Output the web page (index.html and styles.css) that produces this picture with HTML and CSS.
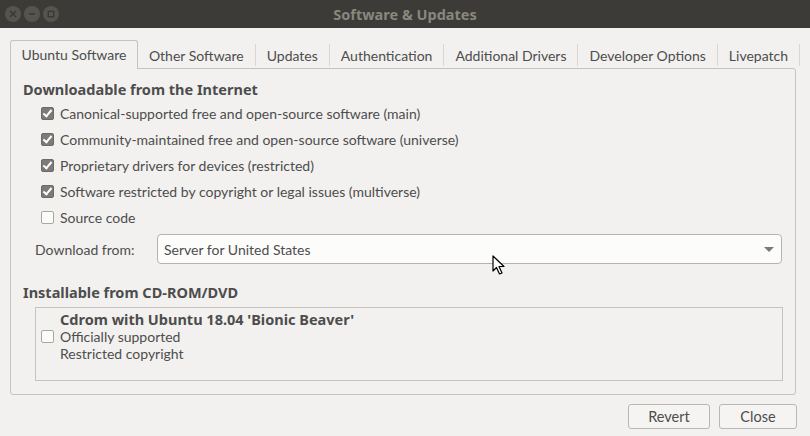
FILE: index.html
```html
<!DOCTYPE html>
<html lang="en">
<head>
    <meta charset="UTF-8">
    <title>Software &amp; Updates</title>
    <link rel="stylesheet" href="styles.css">
</head>
<body>
    <div class="window">
        <div class="titlebar">
            <div class="controls">
                <span class="ctl">
                    <svg width="10" height="10" viewBox="0 0 10 10"><path d="M2 2 L8 8 M8 2 L2 8" stroke="#3a3935" stroke-width="1.6"/></svg>
                </span>
                <span class="ctl">
                    <svg width="10" height="10" viewBox="0 0 10 10"><path d="M2 5 H8" stroke="#3a3935" stroke-width="1.6"/></svg>
                </span>
                <span class="ctl">
                    <svg width="10" height="10" viewBox="0 0 10 10"><rect x="2.3" y="2.3" width="5.4" height="5.4" fill="none" stroke="#3a3935" stroke-width="1.4"/></svg>
                </span>
            </div>
            <div class="title">Software &amp; Updates</div>
        </div>

        <div class="content">
            <div class="tabs">
                <div class="tab active">Ubuntu Software</div>
                <div class="tab">Other Software</div>
                <div class="tab">Updates</div>
                <div class="tab">Authentication</div>
                <div class="tab">Additional Drivers</div>
                <div class="tab">Developer Options</div>
                <div class="tab">Livepatch</div>
            </div>

            <div class="page">
                <div class="heading">Downloadable from the Internet</div>
                <div class="option"><span class="check on"></span>Canonical-supported free and open-source software (main)</div>
                <div class="option"><span class="check on"></span>Community-maintained free and open-source software (universe)</div>
                <div class="option"><span class="check on"></span>Proprietary drivers for devices (restricted)</div>
                <div class="option"><span class="check on"></span>Software restricted by copyright or legal issues (multiverse)</div>
                <div class="option"><span class="check"></span>Source code</div>

                <div class="download-row">
                    <span class="label">Download from:</span>
                    <div class="combo">
                        <span>Server for United States</span>
                        <span class="arrow"></span>
                    </div>
                </div>

                <div class="heading cd-heading">Installable from CD-ROM/DVD</div>
                <div class="cd-box">
                    <div class="cd-item">
                        <span class="check"></span>
                        <div class="cd-text">
                            <div class="cd-name">Cdrom with Ubuntu 18.04 'Bionic Beaver'</div>
                            <div>Officially supported</div>
                            <div>Restricted copyright</div>
                        </div>
                    </div>
                </div>
            </div>

            <div class="actions">
                <button class="btn revert">Revert</button>
                <button class="btn close">Close</button>
            </div>
        </div>

        <svg class="cursor" width="14" height="21" viewBox="0 0 14 21">
            <path d="M1 1 L1 16 L4.5 12.5 L7.5 19 L10 18 L7 11.5 L12 11.5 Z" fill="#fff" stroke="#000" stroke-width="1.2" stroke-linejoin="round"/>
        </svg>
    </div>
</body>
</html>
```

FILE: styles.css
```css
body {
    margin: 0;
    font-family: Lato, "Noto Sans", sans-serif;
    font-size: 14px;
    color: #4d4d4d;
    background-color: #f2f1ef;
}
.window {
    position: relative;
    width: 810px;
    height: 436px;
    background-color: #f2f1ef;
    overflow: hidden;
}
.titlebar {
    height: 28px;
    background-color: #3c3b37;
    display: flex;
    align-items: center;
    position: relative;
}
.controls {
    display: flex;
    gap: 3px;
    padding-left: 5px;
}
.ctl {
    width: 16px;
    height: 16px;
    border-radius: 50%;
    background-color: #55544f;
    display: flex;
    align-items: center;
    justify-content: center;
}
.title {
    position: absolute;
    left: 0;
    right: 0;
    text-align: center;
    font-family: "Noto Sans", sans-serif;
    font-weight: bold;
    color: #8a877f;
    font-size: 14.5px;
}
.content {
    padding: 12px 14px 0 10px;
}
.tabs {
    display: flex;
    height: 28px;
    align-items: stretch;
}
.tab {
    display: flex;
    align-items: center;
    padding: 0 11px;
    border-right: 1px solid #d9d7d3;
    margin: 4px 0 2px;
    white-space: nowrap;
}
.tab.active {
    margin: 0 0 -1px;
    padding: 0 10.5px 1px;
    border: 1px solid #c5c3bf;
    border-bottom: none;
    border-radius: 3px 3px 0 0;
    background-color: #f2f1ef;
    position: relative;
    z-index: 1;
}
.page {
    border: 1px solid #c5c3bf;
    border-radius: 0 3px 3px 3px;
    padding: 9px 0 12px 12px;
    height: 304px;
    box-sizing: content-box;
}
.heading {
    font-family: "Noto Sans", sans-serif;
    font-weight: bold;
    font-size: 14.5px;
    height: 22px;
    line-height: 22px;
}
.option {
    height: 26px;
    display: flex;
    align-items: center;
    padding-left: 18px;
}
.check {
    width: 11px;
    height: 11px;
    border: 1px solid #a9a7a3;
    border-radius: 2px;
    background-color: #fbfbfa;
    margin-right: 6px;
    flex-shrink: 0;
    position: relative;
}
.check.on {
    background-color: #7c7b78;
    border-color: #6b6a67;
}
.check.on::after {
    content: "";
    position: absolute;
    left: 3px;
    top: 0px;
    width: 3px;
    height: 7px;
    border: solid #fff;
    border-width: 0 2px 2px 0;
    transform: rotate(40deg);
}
.download-row {
    display: flex;
    align-items: center;
    margin-top: 4px;
    padding-left: 12px;
    padding-right: 13px;
}
.label {
    width: 122px;
}
.combo {
    flex: 1;
    height: 28px;
    border: 1px solid #b5b3af;
    border-radius: 4px;
    background-color: #fcfcfb;
    display: flex;
    align-items: center;
    justify-content: space-between;
    padding: 0 6px 0 6px;
}
.arrow {
    width: 0;
    height: 0;
    border-left: 5px solid transparent;
    border-right: 5px solid transparent;
    border-top: 5px solid #7a7976;
    margin-right: 1px;
}
.cd-heading {
    margin-top: 17px;
}
.cd-box {
    margin: 4px 12px 0 12px;
    height: 72px;
    border: 1px solid #c5c3bf;
}
.cd-item {
    display: flex;
    align-items: center;
    padding: 3px 0 0 5px;
}
.cd-item .check {
    margin-right: 6px;
}
.cd-text {
    line-height: 17px;
}
.cd-name {
    font-family: "Noto Sans", sans-serif;
    font-weight: bold;
    font-size: 14.5px;
}
.actions {
    display: flex;
    justify-content: flex-end;
    gap: 9px;
    margin-top: 9px;
    margin-right: -1px;
}
.btn {
    font-family: inherit;
    font-size: 14.5px;
    color: #4d4d4d;
    height: 25px;
    border: 1px solid #b9b7b3;
    border-radius: 3px;
    background-color: #f5f4f2;
}
.revert {
    width: 82px;
}
.close {
    width: 78px;
}
.cursor {
    position: absolute;
    left: 492px;
    top: 255px;
}
```
